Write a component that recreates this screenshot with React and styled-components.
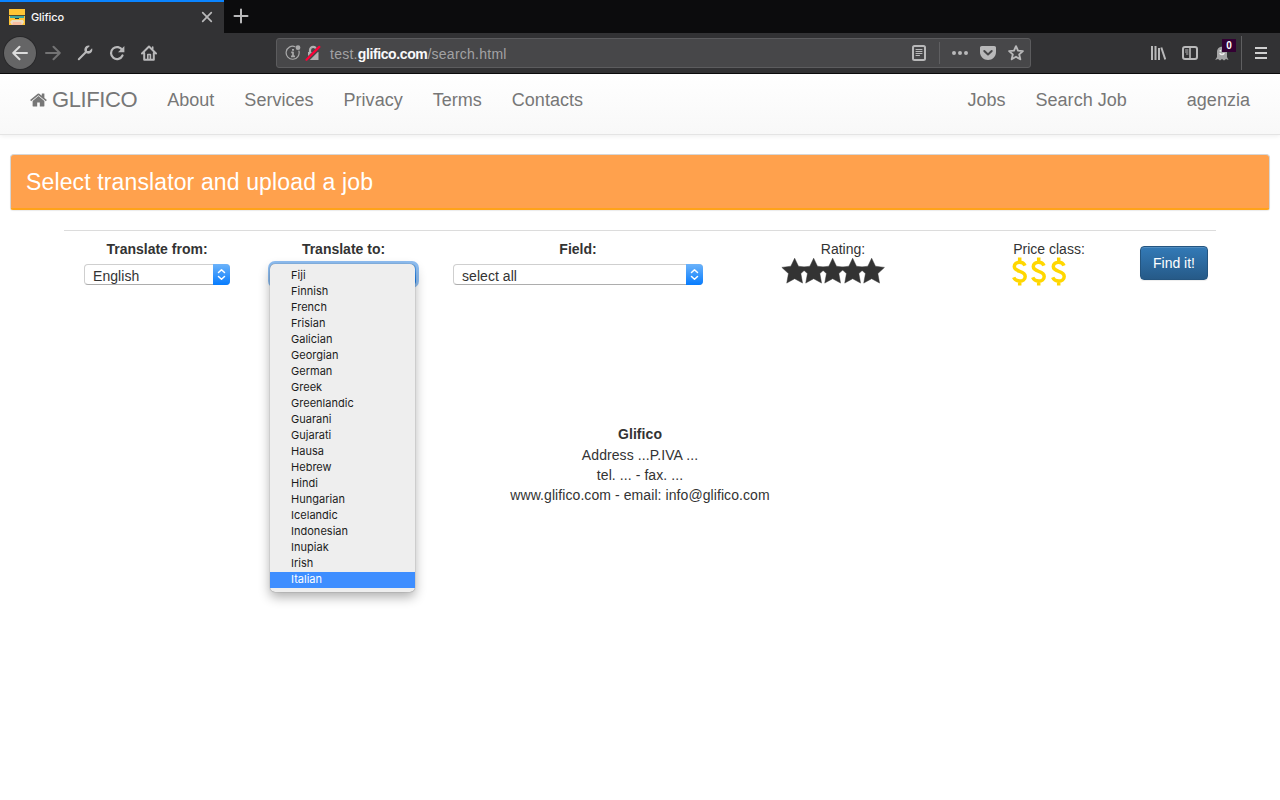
import React from 'react';
import styled, { createGlobalStyle, css } from 'styled-components';

const Global = createGlobalStyle`
  *, *::before, *::after { box-sizing: border-box; }
  html, body { margin: 0; height: 800px; overflow: hidden; background: #fff; }
  body { font: 14px/20px "Liberation Sans", Arial, sans-serif; color: #333; }
`;

const Window = styled.div`
  width: 1280px;
  height: 800px;
  overflow: hidden;
  display: flex;
  flex-direction: column;
`;

/* ---------- browser chrome ---------- */

const TabStrip = styled.div`
  display: flex;
  height: 33px;
  background: #0c0c0d;
  font-family: Inter, sans-serif;
`;

const Tab = styled.div`
  width: 224px;
  border-top: 2px solid #0a84ff;
  background: #323234;
  display: flex;
  align-items: center;
  padding: 0 11px 2px 9px;
  gap: 6px;
`;

const TabTitle = styled.span`
  flex: 1;
  color: #f9f9fa;
  font-size: 11px;
  line-height: 14px;
  font-weight: 500;
  letter-spacing: -0.1px;
`;

const Icon = styled.svg`
  display: block;
  flex: none;
  width: ${p => p.$w || 16}px;
  height: ${p => p.$h || p.$w || 16}px;
  color: ${p => p.$color || '#b9b9ba'};
  margin-left: ${p => p.$ml || 0}px;
  fill: none;
  stroke: currentColor;
  stroke-width: 2;
  stroke-linecap: round;
  stroke-linejoin: round;
`;

const Toolbar = styled.div`
  display: flex;
  align-items: center;
  height: 41px;
  padding: 0 11px 1px 4px;
  background: #323234;
  border-bottom: 1px solid #0c0c0d;
`;

const BackButton = styled.div`
  width: 32px;
  height: 32px;
  border-radius: 50%;
  background: #656566;
  box-shadow: 0 0 0 1px #29292b;
  display: grid;
  place-items: center;
`;

const UrlBar = styled.div`
  display: flex;
  align-items: center;
  width: 755px;
  height: 30px;
  margin-left: 119px;
  padding: 0 6px 0 8px;
  background: #474749;
  border: 1px solid #5c5c5e;
  border-radius: 3px;
`;

const UrlText = styled.span`
  flex: 1;
  margin-left: 9px;
  padding-top: 2px;
  color: #a2a2a4;
  font: 14px/18px "Liberation Sans", Arial, sans-serif;
  letter-spacing: 0.25px;
  b { color: #f9f9fa; font-weight: 700; letter-spacing: -0.38px; }
`;

const Divider = styled.span`
  width: 1px;
  height: ${p => p.$h}px;
  margin: 0 ${p => p.$right}px 0 ${p => p.$left}px;
  background: #5f5f61;
`;

const GhostWrap = styled.span`
  position: relative;
  margin-left: 16px;
`;

const GhostBadge = styled.span`
  position: absolute;
  left: 8px;
  top: -6px;
  width: 14px;
  height: 13px;
  background: #330033;
  color: #fff;
  font: 700 10px/13px "Liberation Sans", Arial, sans-serif;
  text-align: center;
`;

/* ---------- site navigation ---------- */

const Navbar = styled.nav`
  display: flex;
  justify-content: space-between;
  height: 61px;
  padding: 0 15px;
  background: linear-gradient(#fff, #f8f8f8);
  border-bottom: 1px solid #e4e4e4;
  box-shadow: 0 1px 5px rgba(0, 0, 0, 0.075);
`;

const NavGroup = styled.div`
  display: flex;
`;

const NavLink = styled.a`
  padding: 16px 15px;
  margin-left: ${p => p.$gap || 0}px;
  font-size: 18px;
  line-height: 20px;
  letter-spacing: 0.02px;
  color: #777;
`;

const Brand = styled(NavLink)`
  display: flex;
  gap: 5px;
  font-size: 22px;
  letter-spacing: -0.4px;
`;

/* ---------- page ---------- */

const Banner = styled.h1`
  margin: 19px 10px 0;
  height: 56px;
  padding: 0 15px;
  border: 1px solid #d6d6d6;
  border-bottom: 2px solid #ffa31a;
  border-radius: 4px 4px 3px 3px;
  background: #ffa14d;
  color: #fff;
  font-size: 23px;
  font-weight: 400;
  line-height: 55px;
  letter-spacing: 0.13px;
  box-shadow: 0 1px 1px rgba(0, 0, 0, 0.08);
`;

const SearchForm = styled.form`
  display: grid;
  grid-template-columns: 186px 187px 282px 248px 164px 85px;
  width: 1152px;
  height: 58px;
  margin: 20px auto 0;
  padding-top: 8px;
  border-top: 1px solid #dcdcdc;
`;

const Field = styled.div`
  display: flex;
  flex-direction: column;
  align-items: center;
`;

const Label = styled.label`
  font-weight: ${p => (p.$plain ? 400 : 700)};
`;

const focusRing = css`
  box-shadow: 0 0 0 3px #8fbff3;
`;

const SelectBox = styled.div`
  position: relative;
  display: flex;
  justify-content: space-between;
  width: ${p => p.$w}px;
  height: 21px;
  margin-top: 5px;
  border: 1px solid #cfcfcf;
  border-bottom-color: #adadad;
  border-radius: 4px;
  background: #fff;
  padding-left: 8px;
  line-height: 22px;
  letter-spacing: 0.05px;
  ${p => p.$focused && focusRing}
`;

const Stepper = styled.span`
  width: 17px;
  height: 21px;
  margin: -1px -1px 0 0;
  border-radius: 0 4px 4px 0;
  background: linear-gradient(#6cb3fa, #077cfe);
  display: grid;
  place-items: center;
`;

const Menu = styled.ul`
  position: absolute;
  left: -2px;
  top: -1px;
  width: 145px;
  margin: 0;
  padding: 4px 0;
  list-style: none;
  border-radius: 5px;
  background: #eee;
  box-shadow: 0 0 1px rgba(0, 0, 0, 0.55), 0 5px 12px rgba(0, 0, 0, 0.32);
  font: 11px/16px Inter, sans-serif;
`;

const MenuItem = styled.li`
  height: 16px;
  line-height: 15px;
  padding-left: 21px;
  letter-spacing: 0.02px;
  color: ${p => (p.$active ? '#fff' : '#1c1c1c')};
  background: ${p => (p.$active ? '#3e8eff' : 'transparent')};
`;

const GlyphRow = styled.div`
  display: flex;
  margin: -2px 20px 0 0;
`;

const Glyph = styled.svg`
  display: block;
  width: 19.3px;
  height: 28px;
  overflow: visible;
  color: ${p => p.$color};
  fill: ${p => (p.$outline ? 'none' : 'currentColor')};
  stroke: currentColor;
  stroke-width: ${p => p.$outline || 0.45};
  stroke-linejoin: round;
`;

const FindButton = styled.button`
  width: 68px;
  height: 34px;
  margin: 7px 0 0 9px;
  padding: 0;
  border: 1px solid #245580;
  border-radius: 4px;
  background: linear-gradient(#337ab7, #265a88);
  box-shadow: inset 0 1px 0 rgba(255, 255, 255, 0.15), 0 1px 1px rgba(0, 0, 0, 0.075);
  color: #fff;
  font: 14px/20px "Liberation Sans", Arial, sans-serif;
`;

const Footer = styled.footer`
  margin-top: 136px;
  text-align: center;
  letter-spacing: 0.08px;
  p { margin: 0; }
  p:first-child { margin-bottom: 1px; }
`;

const languages = ['Fiji', 'Finnish', 'French', 'Frisian', 'Galician', 'Georgian', 'German', 'Greek',
  'Greenlandic', 'Guarani', 'Gujarati', 'Hausa', 'Hebrew', 'Hindi', 'Hungarian', 'Icelandic',
  'Indonesian', 'Inupiak', 'Irish', 'Italian'];

const Shape = styled.path`
  fill: ${p => p.$fill || 'currentColor'};
  stroke: none;
`;

const Line = styled.path`
  stroke: ${p => p.$color || 'currentColor'};
  stroke-width: ${p => p.$weight || 2};
  stroke-linecap: ${p => (p.$butt ? 'butt' : 'round')};
`;

const Favicon = () => (
  <Icon viewBox="0 0 16 16">
    <Shape $fill="#ffc534" d="M0 0h16v16H0z" />
    <Shape $fill="#4a4a35" d="M0 6h16v1H0z" />
    <Shape $fill="#3fa79c" d="M1 7h14v2H10L9 10H7L6 9H1z" />
    <Shape $fill="#173f46" d="M6 9h4v1H6z" />
    <Shape $fill="#eadcc4" d="M3 11h11l1 2-2 3H3l-2-3z" />
    <Shape $fill="#f8bda0" d="M4 13h8l1 3H3z" />
  </Icon>
);

const Chevrons = () => (
  <Icon viewBox="0 0 9 13" $w={9} $h={13} $color="#fff">
    <Line $weight={1.5} d="M1.500 4.500 4.500 1.700l3 2.800M1.500 8.500l3 2.800 3-2.800" />
  </Icon>
);

const Star = () => (
  <Glyph $color="#333" viewBox="0 0 19.300 28">
    <path d="M9.650 1.200l3.800 8 9 1.200-6.600 6.200 1.700 9.500-7.900-4.400-7.900 4.400 1.700-9.500-6.600-6.200 9-1.200z" />
  </Glyph>
);

const Dollar = () => (
  <Glyph $color="#ffd700" $outline={3.5} viewBox="0 0 19.300 28">
    <path d="M15 8.600C14 6.300 12 5.300 9.600 5.300 6.600 5.300 4.300 6.900 4.300 9.600c0 2.700 2.200 3.700 5.400 4.700 3.300 1 5.500 2.300 5.500 5.100 0 2.900-2.400 4.600-5.500 4.600-2.900 0-5-1.200-6-3.600M9.700.5v4.500M9.700 24v4.500" />
  </Glyph>
);

function BrowserChrome() {
  return (
    <>
      <TabStrip>
        <Tab>
          <Favicon />
          <TabTitle>Glifico</TabTitle>
          <Icon viewBox="0 0 12 12" $w={12}><Line $weight={1.7} d="M1.700 1.700l8.600 8.600M10.300 1.700l-8.600 8.600" /></Icon>
        </Tab>
        <Icon viewBox="0 0 16 32" $w={16} $h={32} $ml={9}><path d="M8 9.500v13M1.500 16h13" /></Icon>
      </TabStrip>
      <Toolbar>
        <BackButton>
          <Icon viewBox="0 0 16 16" $color="#dcdcdc"><path d="M15 8H1.200M7.500 1.700 1.200 8l6.300 6.300" /></Icon>
        </BackButton>
        <Icon viewBox="0 0 16 16" $color="#737374" $ml={9}><path d="M1 8h13.800M8.500 1.700 14.800 8l-6.300 6.300" /></Icon>
        <Icon viewBox="0 0 16 16" $ml={16}>
          <Line d="M1.800 14.200 8.500 7.500" />
          <Shape d="M12.800.9 10 3.700v2.300h2.300l2.800-2.800c.9 2.700-.9 5.500-3.700 5.500-.9 0-1.500-.2-2.100-.5L7.800 6.700C6.500 3.700 8.500.5 11.300.5c.6 0 1 .1 1.500.4z" />
        </Icon>
        <Icon viewBox="0 0 16 16" $ml={16}>
          <Line $weight={2.2} d="M13.500 10.500a6 6 0 1 1-.2-5.300" />
          <Shape d="M15.400 1v6.300H9z" />
        </Icon>
        <Icon viewBox="0 0 16 16" $ml={16}>
          <path d="M1 8.500 8 1.500l7 7M3.200 8v6.800h9.600V8" />
          <Line $weight={1.6} d="M6.800 14V9.500h2.600V14M11.700 2v2" />
        </Icon>
        <UrlBar>
          <Icon viewBox="0 0 16 16" $color="#a9a9aa">
            <Line $weight={1.2} d="M10 1.700a6.500 6.500 0 1 0 3.900 4.300" />
            <Shape d="M13 .3a2.400 2.400 0 1 1 0 4.800a2.400 2.400 0 1 1 0-4.800" />
            <Line $weight={1.7} $butt d="M6.200 7.300H8v4.200M6 11.300h4M7 4.900h2" />
          </Icon>
          <Icon viewBox="0 0 16 16" $ml={4} $color="#b1b1b2">
            <Shape d="M3 7h10.500v8H3z" />
            <Line $weight={2.2} d="M5 7.500V5a3.200 3.200 0 0 1 6.400 0v2.500" />
            <Line $color="#474749" $weight={4} $butt d="M1.500 15.500 14.500 2.500" />
            <Line $color="#ff0039" $weight={2.2} d="M1.500 14.700 14.300 1.900" />
          </Icon>
          <UrlText>test.<b>glifico.com</b>/search.html</UrlText>
          <Icon viewBox="0 0 16 16">
            <rect x="2" y="1" width="12" height="14" rx="1.500" />
            <Line $weight={1} d="M5 4.500h6M5 6.500h6M5 8.500h6M5 10.500h3.500" />
          </Icon>
          <Divider $h={22} $left={12} $right={12} />
          <Icon viewBox="0 0 16 16">
            <Shape d="M2 6a2 2 0 1 1 0 4a2 2 0 1 1 0-4M8 6a2 2 0 1 1 0 4a2 2 0 1 1 0-4M14 6a2 2 0 1 1 0 4a2 2 0 1 1 0-4" />
          </Icon>
          <Icon viewBox="0 0 16 16" $ml={12}>
            <Shape d="M1.800 1h12.400C15.300 1 16 1.800 16 2.800V7c0 4.500-3.600 8-8 8S0 11.500 0 7V2.800C0 1.800.7 1 1.800 1z" />
            <Line $color="#474749" d="M4.300 6 8 9.500 11.700 6" />
          </Icon>
          <Icon viewBox="0 0 16 16" $ml={12}>
            <Line $weight={1.9} d="M8 1.200l2 4.400 4.900.5-3.700 3.300 1.100 4.900L8 11.800l-4.300 2.500 1.100-4.900L1.100 6.100 6 5.600z" />
          </Icon>
        </UrlBar>
        <Icon viewBox="0 0 16 16" $ml={119}>
          <Line $butt d="M2 1v14M5.500 1v14M9 3v12M11.300 2.500l4 12" />
        </Icon>
        <Icon viewBox="0 0 16 16" $ml={16}>
          <rect x="1" y="2" width="14" height="12" rx="2" />
          <Line $weight={1.6} d="M8 2v12" />
          <Line $weight={1} d="M3.500 5h2.500M3.500 7h2.500M4.500 9h1.500" />
        </Icon>
        <GhostWrap>
          <Icon viewBox="0 0 16 16">
            <Shape $fill="#a5a5a6" d="M3 7c0-7 10-7 10 0v5l1.500 3-2.500-1-2 1.500L8 14l-2 1.500L4 14l-2.800 1L3 12z" />
            <Line $color="#eee" $weight={1.5} d="M6 8.500c1 1.300 3 1.300 4 0M6.300 5.500v.5" />
          </Icon>
          <GhostBadge>0</GhostBadge>
        </GhostWrap>
        <Divider $h={34} $left={11} $right={11} />
        <Icon viewBox="0 0 16 16" $color="#d0d0d0"><Line $butt d="M2 3h12M2 8h12M2 13h12" /></Icon>
      </Toolbar>
    </>
  );
}

function Select({ width, value, focused, children }) {
  return (
    <SelectBox $w={width} $focused={focused}>
      <span>{value}</span>
      <Stepper><Chevrons /></Stepper>
      {children}
    </SelectBox>
  );
}

export default function App() {
  return (
    <Window>
      <Global />
      <BrowserChrome />
      <Navbar>
        <NavGroup>
          <Brand>
            <Icon viewBox="0 0 1664 1792" $w={17} $h={20} $color="#777">
              <Shape d="M1408 992v480q0 26-19 45t-45 19H960v-384H704v384H320q-26 0-45-19t-19-45V992q0-1 .5-3t.5-3l575-474 575 474q1 2 1 6zm223-69l-62 74q-8 9-21 11h-3q-13 0-21-7L832 424l-692 577q-12 8-24 7-13-2-21-11l-62-74q-8-10-7-23.500T37 878l719-599q32-26 76-26t76 26l244 204V288q0-14 9-23t23-9h192q14 0 23 9t9 23v408l219 182q10 8 11 21.500t-7 23.500z" />
            </Icon>
            <span>GLIFICO</span>
          </Brand>
          <NavLink>About</NavLink>
          <NavLink>Services</NavLink>
          <NavLink>Privacy</NavLink>
          <NavLink>Terms</NavLink>
          <NavLink>Contacts</NavLink>
        </NavGroup>
        <NavGroup>
          <NavLink>Jobs</NavLink>
          <NavLink>Search Job</NavLink>
          <NavLink $gap={30}>agenzia</NavLink>
        </NavGroup>
      </Navbar>
      <Banner>Select translator and upload a job</Banner>
      <SearchForm>
        <Field>
          <Label>Translate from:</Label>
          <Select width={146} value="English" />
        </Field>
        <Field>
          <Label>Translate to:</Label>
          <Select width={145} value="" focused>
            <Menu>
              {languages.map(name => (
                <MenuItem key={name} $active={name === 'Italian'}>{name}</MenuItem>
              ))}
            </Menu>
          </Select>
        </Field>
        <Field>
          <Label>Field:</Label>
          <Select width={250} value="select all" />
        </Field>
        <Field>
          <Label $plain>Rating:</Label>
          <GlyphRow>{[1, 2, 3, 4, 5].map(n => <Star key={n} />)}</GlyphRow>
        </Field>
        <Field>
          <Label $plain>Price class:</Label>
          <GlyphRow>{[1, 2, 3].map(n => <Dollar key={n} />)}</GlyphRow>
        </Field>
        <FindButton type="button">Find it!</FindButton>
      </SearchForm>
      <Footer>
        <p><b>Glifico</b></p>
        <p>Address ...P.IVA ...</p>
        <p>tel. ... - fax. ...</p>
        <p>www.glifico.com - email: info@glifico.com</p>
      </Footer>
    </Window>
  );
}
